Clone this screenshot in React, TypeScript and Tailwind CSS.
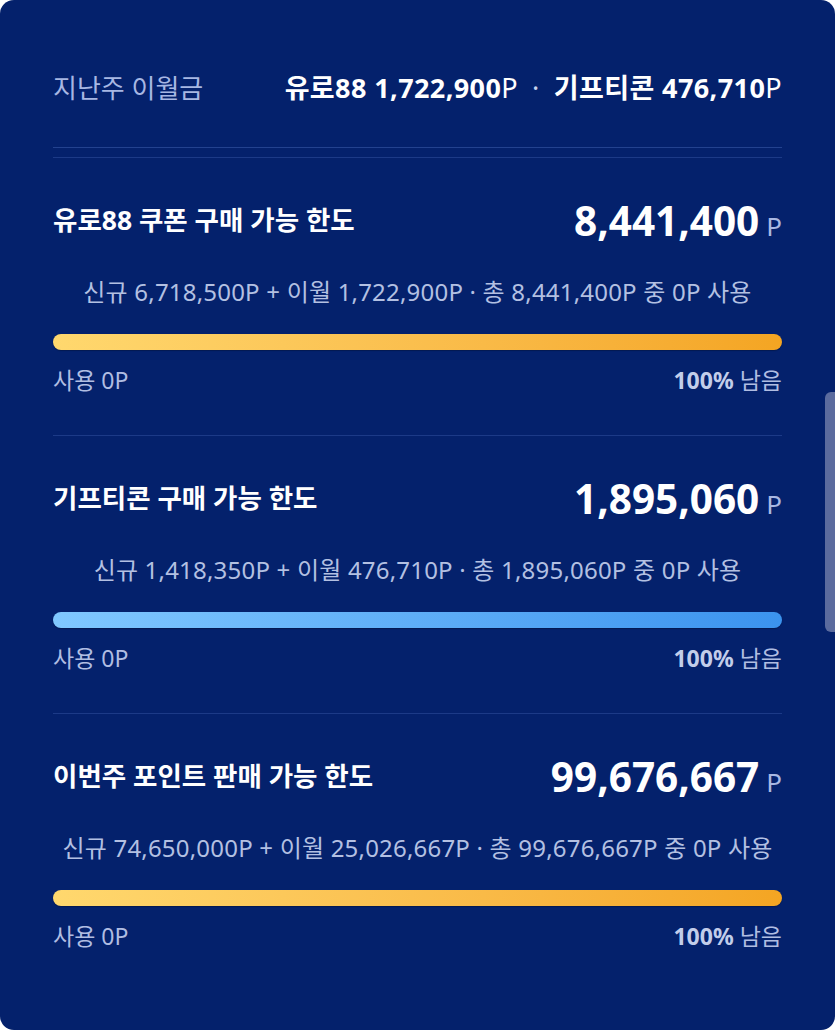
import React from "react";

type Sec = {
  title: string;
  amount: string;
  sub: string;
  bar: string;
};

const sections: Sec[] = [
  {
    title: "유로88 쿠폰 구매 가능 한도",
    amount: "8,441,400",
    sub: "신규 6,718,500P + 이월 1,722,900P · 총 8,441,400P 중 0P 사용",
    bar: "bg-gradient-to-r from-[#ffd86e] to-[#f4a522]",
  },
  {
    title: "기프티콘 구매 가능 한도",
    amount: "1,895,060",
    sub: "신규 1,418,350P + 이월 476,710P · 총 1,895,060P 중 0P 사용",
    bar: "bg-gradient-to-r from-[#80c8ff] to-[#3b93ee]",
  },
  {
    title: "이번주 포인트 판매 가능 한도",
    amount: "99,676,667",
    sub: "신규 74,650,000P + 이월 25,026,667P · 총 99,676,667P 중 0P 사용",
    bar: "bg-gradient-to-r from-[#ffd86e] to-[#f4a522]",
  },
];

function Section({ s }: { s: Sec }) {
  return (
    <div className="border-t border-[#1c3a87] pt-[39px] pb-[41px]">
      <div className="flex h-[48px] items-center justify-between">
        <div className="text-[26.5px] font-bold text-white">{s.title}</div>
        <div className="flex items-baseline">
          <span className="text-[40.5px] font-bold leading-[48px] text-white">{s.amount}</span>
          <span className="ml-[7px] text-[26px] text-[#a9b8e2]">P</span>
        </div>
      </div>
      <div className="mt-[32px] h-[30px] whitespace-nowrap text-center text-[24px] leading-[30px] tracking-[0.2px] text-[#b3c0e2]">
        {s.sub}
      </div>
      <div className={`mt-[27px] h-[16px] rounded-full ${s.bar} shadow-[0_1px_1px_rgba(0,0,0,0.25)]`} />
      <div className="mt-[16px] flex h-[28px] items-center justify-between text-[23px] text-[#b0bde2]">
        <span>사용 0P</span>
        <span>
          <span className="font-bold text-[#c2cdea]">100%</span> 남음
        </span>
      </div>
    </div>
  );
}

export default function App() {
  return (
    <div
      className="bg-white"
      style={{ fontFamily: '"Noto Sans", "Noto Sans CJK KR", sans-serif' }}
    >
      <div className="relative h-[1030px] overflow-hidden rounded-[14px] bg-[#04216c] px-[53px]">
        <div className="mt-[72px] flex h-[32px] items-center justify-between whitespace-nowrap">
          <span className="text-[26px] text-[#a7b7e3]">지난주 이월금</span>
          <span className="text-[27px] tracking-[0.4px] text-white">
            <span className="font-bold">유로88 1,722,900</span>P
            <span className="mx-[14px] text-[#c8d2ee]">·</span>
            <span className="font-bold">기프티콘 476,710</span>P
          </span>
        </div>
        <div className="mt-[43px] border-t border-[#23428f]" />
        <div className="mt-[9px]">
          {sections.map((s) => (
            <Section key={s.title} s={s} />
          ))}
        </div>
        <div className="absolute right-0 top-[392px] h-[240px] w-[10px] rounded-l-[6px] bg-[#5b6b9e]" />
      </div>
    </div>
  );
}
